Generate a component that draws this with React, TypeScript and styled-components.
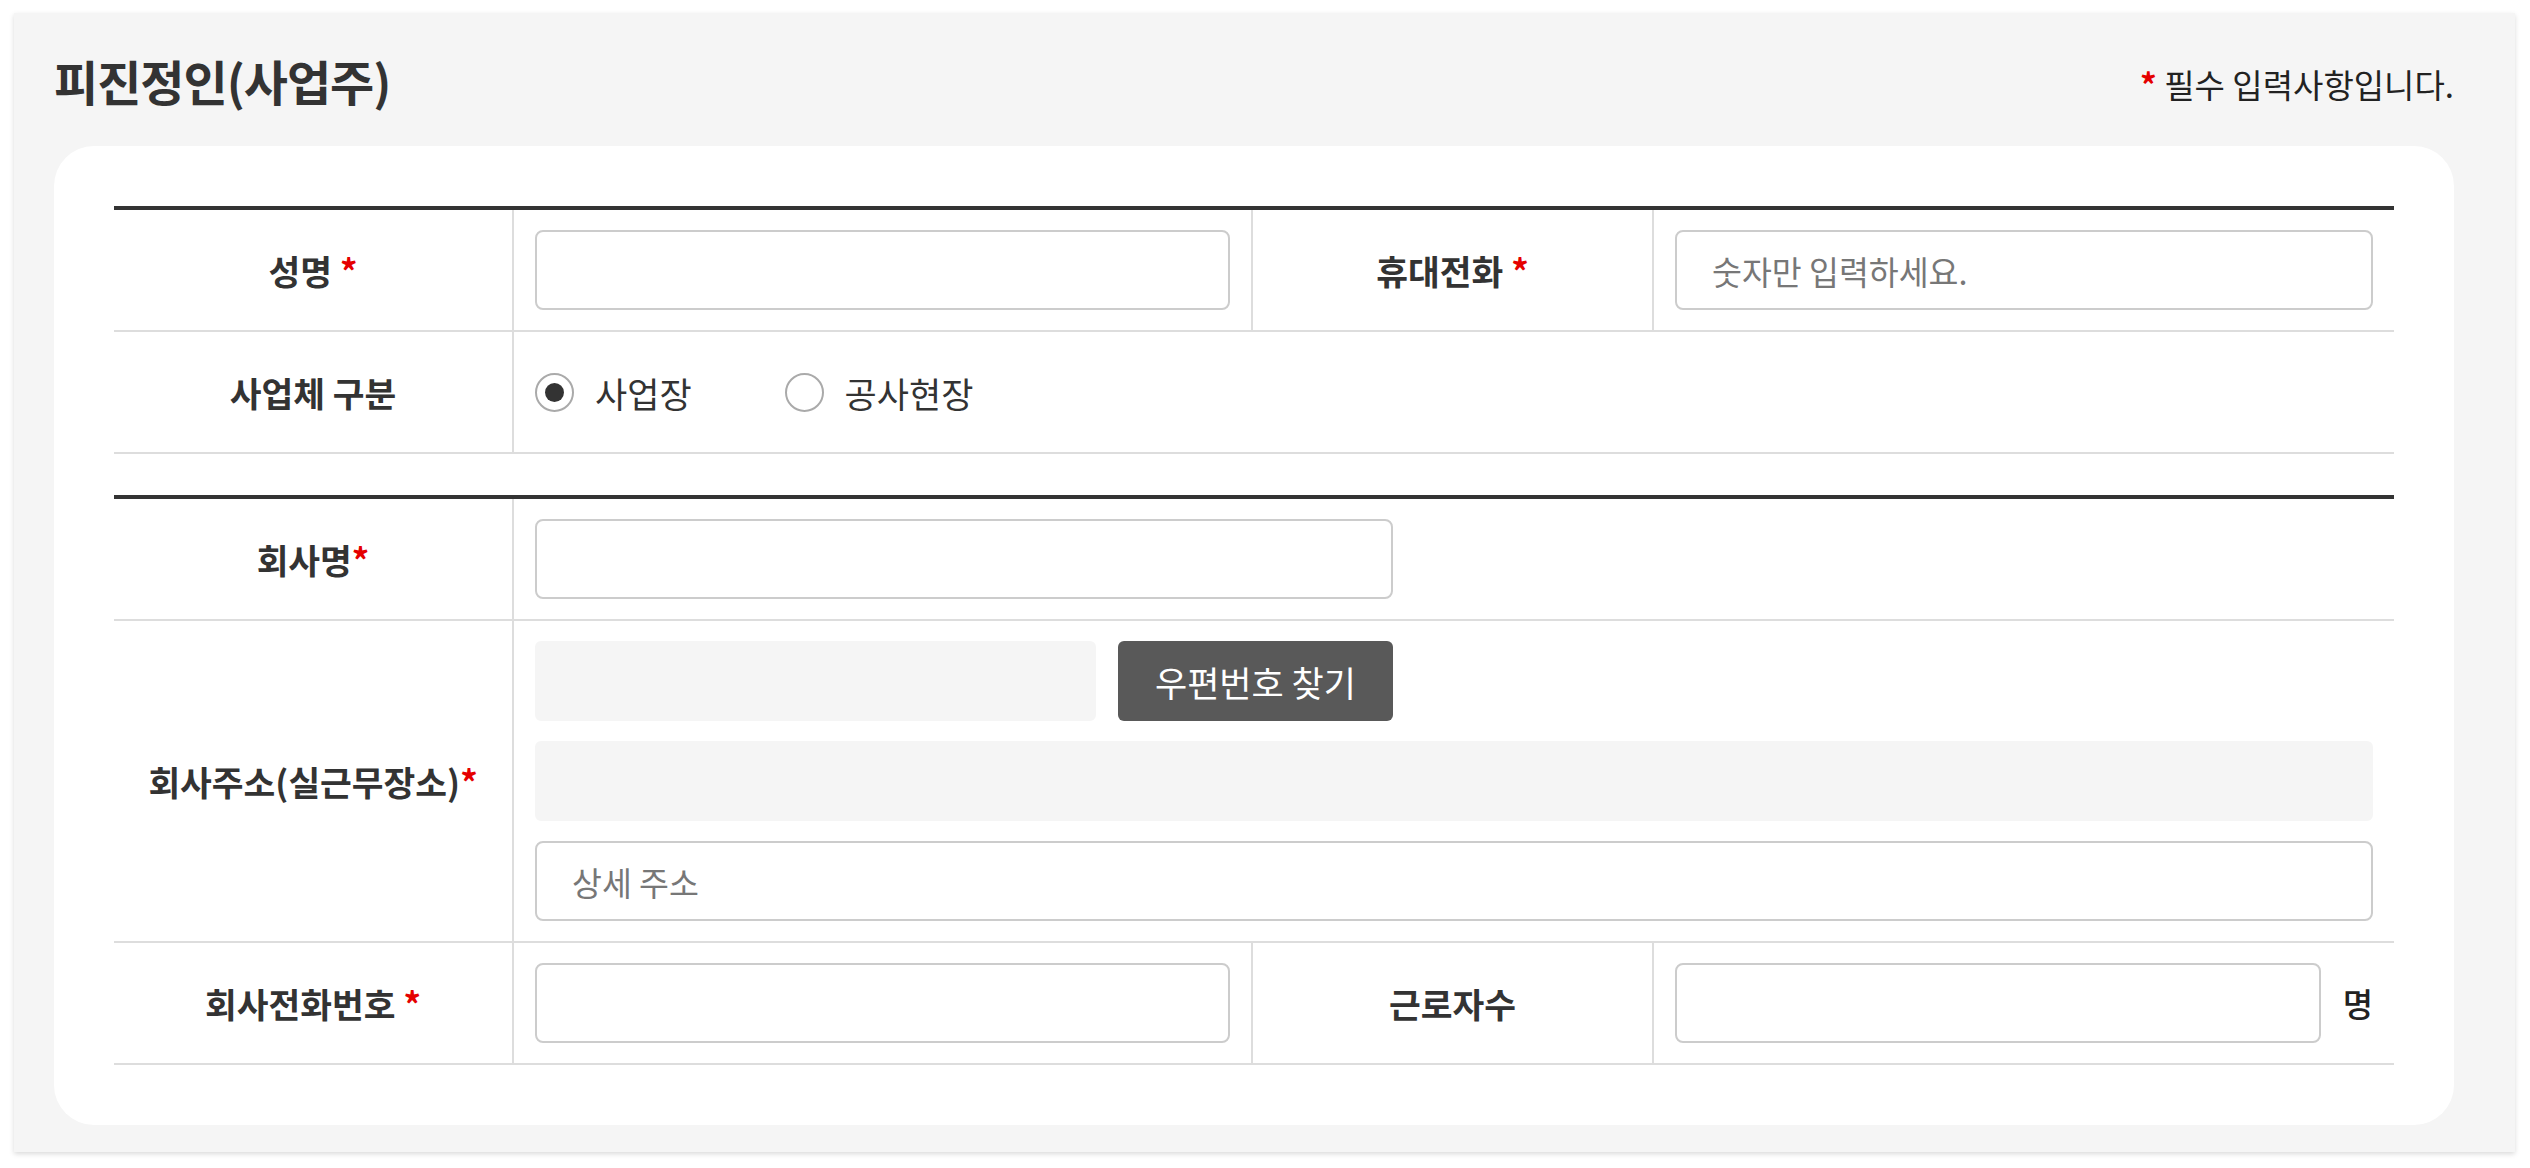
import React from "react";
import styled, {createGlobalStyle} from "styled-components";

const GlobalStyle = createGlobalStyle`
  * {
    box-sizing: border-box;
  }

  body {
    margin: 0;
    background: #fff;
    color: #333;
    font-family: "Noto Sans CJK KR", "Noto Sans", sans-serif;
  }
`;

const Page = styled.div`
  padding: 13px 15px 15px 14px;
`;

const Panel = styled.section`
  background: #f5f5f5;
  box-shadow: 0 2px 5px rgba(0, 0, 0, 0.15);
  padding: 0 61px 27px 40px;
`;

const Header = styled.header`
  height: 133px;
  display: flex;
  align-items: center;
  justify-content: space-between;
`;

const Title = styled.h2`
  margin: 0;
  font-size: 48px;
  font-weight: 700;
  color: #333;
  letter-spacing: -1px;
`;

const Note = styled.p`
  margin: 0;
  padding-top: 8px;
  font-size: 33px;
  color: #222;
`;

const Req = styled.span`
  color: #e50000;
  font-weight: 700;
`;

const Card = styled.div`
  background: #fff;
  border-radius: 40px;
  padding: 60px;
`;

const Table = styled.div`
  border-top: 4px solid #333;

  & + & {
    margin-top: 41px;
  }
`;

const Row = styled.div`
  display: grid;
  grid-template-columns: 400px 739px 401px 1fr;
  border-bottom: 2px solid #ddd;
`;

const Label = styled.div`
  display: flex;
  align-items: center;
  justify-content: center;
  font-size: 34.5px;
  font-weight: 700;
  color: #333;
  border-right: 2px solid #ddd;
`;

const Cell = styled.div<{ $span?: number; $last?: boolean }>`
  grid-column: span ${p => p.$span || 1};
  padding: 20px 21px;
  display: flex;
  flex-direction: column;
  gap: 20px;
  border-right: ${p => (p.$last ? "none" : "2px solid #ddd")};
`;

const Line = styled.div`
  display: flex;
  align-items: center;
  gap: 22px;
`;

const Input = styled.input<{ $width?: number; $grow?: boolean }>`
  width: ${p => (p.$width ? `${p.$width}px` : "100%")};
  flex: ${p => (p.$grow ? "1 1 auto" : "none")};
  min-width: 0;
  height: 80px;
  padding: 0 35px;
  border: 2px solid #ccc;
  border-radius: 8px;
  background: #fff;
  font-family: inherit;
  font-size: 32.5px;
  color: #333;
  outline: none;

  &::placeholder {
    color: #777;
  }
`;

const ReadOnly = styled(Input)`
  background: #f5f5f5;
  border-color: #f5f5f5;
  border-radius: 6px;
`;

const ZipButton = styled.button`
  width: 275px;
  height: 80px;
  flex: none;
  border: none;
  border-radius: 6px;
  background: #595959;
  color: #fff;
  font-family: inherit;
  font-size: 35px;
  cursor: pointer;
`;

const RadioGroup = styled.div`
  height: 80px;
  display: flex;
  align-items: center;
  gap: 93px;
`;

const RadioOption = styled.label`
  display: flex;
  align-items: center;
  gap: 21px;
  font-size: 35px;
  color: #333;
  cursor: pointer;
`;

const RadioInput = styled.input`
  appearance: none;
  margin: 0;
  width: 39px;
  height: 39px;
  border: 2px solid #aaa;
  border-radius: 50%;
  background: #fff;
  display: grid;
  place-items: center;

  &:checked::after {
    content: "";
    width: 19px;
    height: 19px;
    border-radius: 50%;
    background: #333;
  }
`;

const Unit = styled.span`
  font-size: 33px;
  font-weight: 500;
  color: #222;
`;

const App = () => {
    return (
        <Page>
            <GlobalStyle/>
            <Panel>
                <Header>
                    <Title>피진정인(사업주)</Title>
                    <Note><Req>*</Req> 필수 입력사항입니다.</Note>
                </Header>
                <Card>
                    <Table>
                        <Row>
                            <Label>성명&nbsp;<Req>*</Req></Label>
                            <Cell><Input type="text"/></Cell>
                            <Label>휴대전화&nbsp;<Req>*</Req></Label>
                            <Cell $last><Input type="text" placeholder="숫자만 입력하세요."/></Cell>
                        </Row>
                        <Row>
                            <Label>사업체 구분</Label>
                            <Cell $span={3} $last>
                                <RadioGroup>
                                    <RadioOption>
                                        <RadioInput type="radio" name="bizType" defaultChecked/>
                                        사업장
                                    </RadioOption>
                                    <RadioOption>
                                        <RadioInput type="radio" name="bizType"/>
                                        공사현장
                                    </RadioOption>
                                </RadioGroup>
                            </Cell>
                        </Row>
                    </Table>

                    <Table>
                        <Row>
                            <Label>회사명<Req>*</Req></Label>
                            <Cell $span={3} $last><Input type="text" $width={858}/></Cell>
                        </Row>
                        <Row>
                            <Label>회사주소(실근무장소)<Req>*</Req></Label>
                            <Cell $span={3} $last>
                                <Line>
                                    <ReadOnly type="text" readOnly $width={561}/>
                                    <ZipButton type="button">우편번호 찾기</ZipButton>
                                </Line>
                                <ReadOnly type="text" readOnly/>
                                <Input type="text" placeholder="상세 주소"/>
                            </Cell>
                        </Row>
                        <Row>
                            <Label>회사전화번호&nbsp;<Req>*</Req></Label>
                            <Cell><Input type="text"/></Cell>
                            <Label>근로자수</Label>
                            <Cell $last>
                                <Line>
                                    <Input type="text" $grow/>
                                    <Unit>명</Unit>
                                </Line>
                            </Cell>
                        </Row>
                    </Table>
                </Card>
            </Panel>
        </Page>
    )
}

export default App
